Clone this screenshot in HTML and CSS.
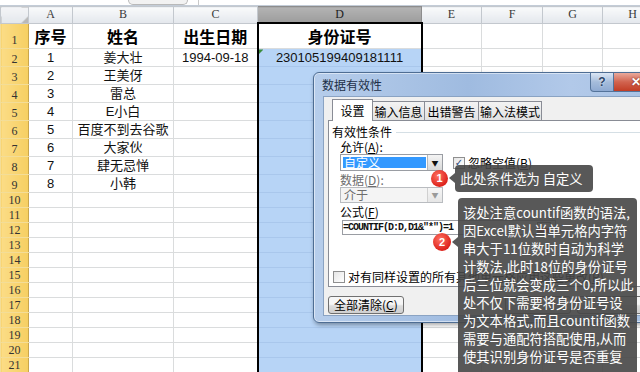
FILE: index.html
```html
<!DOCTYPE html>
<html lang="zh-CN">
<head>
    <meta charset="UTF-8">
    <title>数据有效性</title>
    <link rel="stylesheet" href="styles.css">
</head>
<body>
<div class="sheet">
    <div class="formula-bar">
        <span class="name-box"></span>
        <span class="expand"></span>
        <span class="fx-line"></span>
    </div>

    <table class="grid">
        <colgroup>
            <col class="w-row"><col class="w-a"><col class="w-b"><col class="w-c"><col class="w-d">
            <col class="w-e"><col class="w-f"><col class="w-g"><col class="w-h">
        </colgroup>
        <thead>
            <tr>
                <th class="corner"></th><th>A</th><th>B</th><th>C</th><th class="sel">D</th>
                <th>E</th><th>F</th><th>G</th><th>H</th>
            </tr>
        </thead>
        <tbody>
            <tr class="r-head">
                <th>1</th><td class="hd">序号</td><td class="hd">姓名</td><td class="hd">出生日期</td>
                <td class="hd col-d active">身份证号</td><td></td><td></td><td></td><td></td>
            </tr>
            <tr class="r-data">
                <th>2</th><td>1</td><td>姜大壮</td><td>1994-09-18</td>
                <td class="col-d as-text">230105199409181111</td><td></td><td></td><td></td><td></td>
            </tr>
            <tr class="r-data"><th>3</th><td>2</td><td>王美伢</td><td></td><td class="col-d"></td><td></td><td></td><td></td><td></td></tr>
            <tr class="r-data"><th>4</th><td>3</td><td>雷总</td><td></td><td class="col-d"></td><td></td><td></td><td></td><td></td></tr>
            <tr class="r-data"><th>5</th><td>4</td><td>E小白</td><td></td><td class="col-d"></td><td></td><td></td><td></td><td></td></tr>
            <tr class="r-data"><th>6</th><td>5</td><td>百度不到去谷歌</td><td></td><td class="col-d"></td><td></td><td></td><td></td><td></td></tr>
            <tr class="r-data"><th>7</th><td>6</td><td>大家伙</td><td></td><td class="col-d"></td><td></td><td></td><td></td><td></td></tr>
            <tr class="r-data"><th>8</th><td>7</td><td>肆无忌惮</td><td></td><td class="col-d"></td><td></td><td></td><td></td><td></td></tr>
            <tr class="r-data"><th>9</th><td>8</td><td>小韩</td><td></td><td class="col-d"></td><td></td><td></td><td></td><td></td></tr>
            <tr class="r-empty"><th>10</th><td></td><td></td><td></td><td class="col-d"></td><td></td><td></td><td></td><td></td></tr>
            <tr class="r-empty"><th>11</th><td></td><td></td><td></td><td class="col-d"></td><td></td><td></td><td></td><td></td></tr>
            <tr class="r-empty"><th>12</th><td></td><td></td><td></td><td class="col-d"></td><td></td><td></td><td></td><td></td></tr>
            <tr class="r-empty"><th>13</th><td></td><td></td><td></td><td class="col-d"></td><td></td><td></td><td></td><td></td></tr>
            <tr class="r-empty"><th>14</th><td></td><td></td><td></td><td class="col-d"></td><td></td><td></td><td></td><td></td></tr>
            <tr class="r-empty"><th>15</th><td></td><td></td><td></td><td class="col-d"></td><td></td><td></td><td></td><td></td></tr>
            <tr class="r-empty"><th>16</th><td></td><td></td><td></td><td class="col-d"></td><td></td><td></td><td></td><td></td></tr>
            <tr class="r-empty"><th>17</th><td></td><td></td><td></td><td class="col-d"></td><td></td><td></td><td></td><td></td></tr>
            <tr class="r-empty"><th>18</th><td></td><td></td><td></td><td class="col-d"></td><td></td><td></td><td></td><td></td></tr>
            <tr class="r-empty"><th>19</th><td></td><td></td><td></td><td class="col-d"></td><td></td><td></td><td></td><td></td></tr>
            <tr class="r-empty"><th>20</th><td></td><td></td><td></td><td class="col-d"></td><td></td><td></td><td></td><td></td></tr>
            <tr class="r-empty"><th>21</th><td></td><td></td><td></td><td class="col-d"></td><td></td><td></td><td></td><td></td></tr>
            <tr class="r-empty"><th></th><td></td><td></td><td></td><td class="col-d"></td><td></td><td></td><td></td><td></td></tr>
        </tbody>
    </table>

    <div class="dialog">
        <div class="dlg-title">
            数据有效性
            <div class="dlg-btns">
                <span class="tb-help">?</span>
                <span class="tb-close">✕</span>
            </div>
        </div>
        <div class="dlg-body">
            <div class="tabs">
                <span class="tab t1 active">设置</span>
                <span class="tab t2">输入信息</span>
                <span class="tab t3">出错警告</span>
                <span class="tab t4">输入法模式</span>
            </div>
            <div class="panel">
                <div class="group-head">有效性条件</div>
                <div class="fields">
                    <div class="field-label">允许(<u>A</u>):</div>
                    <div class="combo-row">
                        <div class="combo">
                            <span class="val">自定义</span>
                            <span class="arrow">▼</span>
                        </div>
                        <div class="check">
                            <span class="box checked">✓</span>
                            <span>忽略空值(<u>B</u>)</span>
                        </div>
                    </div>
                    <div class="field-label disabled">数据(<u>D</u>):</div>
                    <div class="combo off">
                        <span class="val">介于</span>
                        <span class="arrow">▼</span>
                    </div>
                    <div class="field-label formula-label">公式(<u>F</u>)</div>
                    <div class="formula">
                        <span>=COUNTIF(D:D,D1&amp;"*")=1</span>
                        <span class="picker"></span>
                    </div>
                </div>
                <div class="check apply">
                    <span class="box"></span>
                    <span>对有同样设置的所有其他单元格应用这些更改(<u>P</u>)</span>
                </div>
            </div>
            <div class="btn-row">
                <span class="btn">全部清除(<u>C</u>)</span>
                <span class="btn ok"></span>
                <span class="btn cancel"></span>
            </div>
        </div>
    </div>

    <span class="badge b1">1</span>
    <div class="callout c1">此处条件选为 自定义</div>

    <span class="badge b2">2</span>
    <div class="callout c2">
        该处注意countif函数的语法,<br>
        因Excel默认当单元格内字符<br>
        串大于11位数时自动为科学<br>
        计数法,此时18位的身份证号<br>
        后三位就会变成三个0,所以此<br>
        处不仅下需要将身份证号设<br>
        为文本格式,而且countif函数<br>
        需要与通配符搭配使用,从而<br>
        使其识别身份证号是否重复
    </div>
</div>
</body>
</html>
```

FILE: styles.css
```css
body {
    margin: 0;
    width: 640px;
    height: 372px;
    overflow: hidden;
    background: #fff;
    font-family: 'Liberation Sans', 'Noto Sans CJK SC', sans-serif;
}

.sheet {
    position: relative;
    width: 640px;
    height: 372px;
    overflow: hidden;
}

/* bottom edge of the formula bar */
.formula-bar {
    height: 6px;
    box-sizing: border-box;
    border-bottom: 1px solid #c3ccd7;
    display: flex;
}

.name-box {
    width: 128px;
}

.expand {
    width: 58px;
    height: 4px;
    border: 1px solid #b9b9b9;
    border-top: none;
    border-radius: 0 0 6px 6px;
    background: #f2f2f2;
}

.fx-line {
    width: 10px;
    border-right: 1px solid #c9c9c9;
}

/* grid: row heights come from the row header line-height */
.grid {
    border-collapse: collapse;
    table-layout: fixed;
    width: 662px;
}

.w-row { width: 28px; }
.w-a { width: 44px; }
.w-b { width: 101px; }
.w-c { width: 84px; }
.w-d { width: 164px; }
.w-e { width: 60px; }
.w-f { width: 61px; }
.w-g { width: 60px; }
.w-h { width: 60px; }

.grid th,
.grid td {
    padding: 0;
    border: 1px solid #dadcdd;
    overflow: hidden;
    white-space: nowrap;
    text-align: center;
    line-height: 1;
}

.grid td {
    font-size: 13px;
    color: #111;
}

.grid thead th {
    background: linear-gradient(#f9fafb, #e3e7ec);
    border-color: #c3c8ce;
    font: normal 12px/15px 'Liberation Serif', serif;
    color: #3a3a3a;
}

.grid thead th.corner {
    background: linear-gradient(315deg, #b9b9b9 5px, transparent 5px), linear-gradient(#f4f5f7, #e3e7ec);
}

.grid thead th.sel {
    background: linear-gradient(#b3b3b3, #9d9d9d);
    color: #1c1c1c;
    border-color: #8d8d8d;
}

.grid tbody th {
    background: linear-gradient(to right, #fbdc86, #f6cf62);
    border-color: #f3dd98;
    border-right-color: #c9a64c;
    font: normal 12px 'Liberation Serif', serif;
    color: #333;
    line-height: 14px;
}

.r-head th {
    padding-top: 8px;
}

.r-data th {
    padding-top: 3px;
}

.grid td.hd {
    font: bold 16px 'Noto Sans CJK SC', sans-serif;
    color: #000;
}

.grid td.col-d {
    background: #b7d4f6;
    border-left: 2px solid #000;
    border-right: 2px solid #000;
    border-bottom-color: #a9c7ec;
}

.grid td.col-d.active {
    background: #fff;
    border-top: 2px solid #000;
    border-bottom-color: #dadcdd;
}

.grid td.col-d.as-text {
    background: linear-gradient(135deg, #3b8c3b 3px, transparent 3px), #b7d4f6;
}

/* dialog */
.dialog {
    position: absolute;
    left: 313px;
    top: 72px;
    width: 345px;
    height: 251px;
    box-sizing: border-box;
    border: 1px solid #4e6d93;
    border-radius: 6px;
    background: linear-gradient(to right, #b6cdeb, #9fbbe0 45%, #b2c9e9 75%, #a8c2e4);
    box-shadow: inset 0 0 0 1px rgba(255, 255, 255, 0.5), 1px 2px 4px rgba(0, 0, 0, 0.35);
    display: flex;
    flex-direction: column;
    font-family: 'Noto Sans CJK SC', sans-serif;
    font-size: 12px;
    color: #000;
}

.dlg-title {
    height: 23px;
    display: flex;
    align-items: center;
    padding-left: 8px;
    color: #1d2f47;
    position: relative;
}

.dlg-btns {
    position: absolute;
    left: 276px;
    top: 0;
    display: flex;
}

.tb-help,
.tb-close {
    height: 18px;
    display: flex;
    align-items: center;
    justify-content: center;
    border: 1px solid #54739a;
    border-top: none;
    color: #fff;
    font: bold 12px 'Liberation Sans', sans-serif;
}

.tb-help {
    width: 22px;
    border-radius: 0 0 0 4px;
    background: linear-gradient(#dbe6f4, #a5bcdb 50%, #8eaad2);
    color: #2b4467;
    text-shadow: 0 0 2px #fff;
}

.tb-close {
    width: 43px;
    border-left: none;
    background: linear-gradient(#e9a99b, #d1634f 50%, #c23d25);
    text-shadow: 0 0 2px #6a1a0e;
}

.dlg-body {
    flex: 1;
    margin: 0 7px 6px 9px;
    background: #f0f0f0;
    border: 1px solid #8aa3c3;
    padding: 0 6px 0 4px;
    display: flex;
    flex-direction: column;
}

.tabs {
    display: flex;
    margin-top: 4px;
    padding-left: 4px;
    height: 20px;
}

.tab {
    box-sizing: border-box;
    height: 20px;
    border: 1px solid #898c95;
    border-bottom: none;
    margin-right: -1px;
    background: linear-gradient(#f3f3f3, #e1e1e1);
    text-align: center;
    line-height: 19px;
}

.t1 { width: 41px; }
.t2 { width: 53px; }
.t3 { width: 55px; }
.t4 { width: 64px; }

.tab.active {
    position: relative;
    z-index: 1;
    height: 22px;
    margin-top: -2px;
    background: #fff;
    line-height: 22px;
}

.panel {
    height: 167px;
    box-sizing: border-box;
    margin-top: -1px;
    border: 1px solid #898c95;
    background: #fff;
    padding: 4px 0 0 3px;
    display: flex;
    flex-direction: column;
}

.group-head {
    display: flex;
    align-items: center;
    line-height: 14px;
}

.group-head::after {
    content: "";
    flex: 1;
    border-top: 1px solid #d5dfe5;
    margin-left: 4px;
}

.fields {
    margin-left: 8px;
    display: flex;
    flex-direction: column;
}

.field-label {
    line-height: 14px;
    margin-top: 1px;
}

.field-label.disabled {
    color: #6d6d6d;
    margin-top: 2px;
}

.field-label.formula-label {
    margin-top: 2px;
}

.combo-row {
    display: flex;
    align-items: center;
}

.combo {
    width: 103px;
    height: 17px;
    box-sizing: border-box;
    border: 1px solid #9a9da3;
    background: #fff;
    display: flex;
}

.combo .val {
    flex: 1;
    margin: 2px 1px 2px 2px;
    padding-left: 1px;
    background: #3399ff;
    color: #fff;
    line-height: 11px;
}

.combo .arrow {
    width: 14px;
    border-left: 1px solid #b7b7b7;
    background: linear-gradient(#f4f4f4, #d9d9d9);
    display: flex;
    align-items: center;
    justify-content: center;
    font-size: 7px;
    color: #111;
}

.combo.off {
    height: 16px;
    border-color: #b9bcc0;
    background: #f4f4f4;
}

.combo.off .val {
    background: none;
    color: #6d6d6d;
    margin: 0 0 0 2px;
    line-height: 14px;
}

.combo.off .arrow {
    color: #9a9a9a;
    border-left-color: #d0d0d0;
    background: linear-gradient(#f6f6f6, #e6e6e6);
}

.check {
    display: flex;
    align-items: center;
    gap: 3px;
    margin-left: 10px;
    line-height: 14px;
    white-space: nowrap;
}

.box {
    width: 12px;
    height: 12px;
    box-sizing: border-box;
    border: 1px solid #8f8f8f;
    background: linear-gradient(135deg, #e6e6e6, #fff);
    display: flex;
    align-items: center;
    justify-content: center;
    font: bold 10px 'DejaVu Sans', sans-serif;
    color: #2b4a7a;
}

.formula {
    width: 214px;
    height: 15px;
    box-sizing: border-box;
    margin: 1px 0 0 2px;
    border: 1px solid #9a9da3;
    background: #fff;
    display: flex;
    align-items: center;
    justify-content: space-between;
    font: bold 10px 'Liberation Mono', monospace;
    letter-spacing: -1px;
    color: #111;
}

.picker {
    width: 12px;
    height: 9px;
    margin-right: 4px;
    border: 1px solid #7a7a7a;
    background: linear-gradient(#fff 50%, #c9372c 50%);
}

.check.apply {
    margin: auto 0 2px 1px;
}

.btn-row {
    display: flex;
    gap: 6px;
    margin-top: 9px;
}

.btn {
    height: 18px;
    box-sizing: border-box;
    border: 1px solid #707070;
    border-radius: 3px;
    background: linear-gradient(#f6f6f6 45%, #dddddd 55%, #d0d0d0);
    padding: 0 5px;
    line-height: 16px;
    text-align: center;
}

.btn.ok {
    margin-left: auto;
    width: 66px;
}

.btn.cancel {
    width: 66px;
}

/* annotations */
.callout {
    position: absolute;
    background: rgba(70, 70, 70, 0.9);
    color: #fff;
    font-family: 'Noto Sans CJK SC', sans-serif;
    font-size: 13.3px;
    border-radius: 4px;
    white-space: nowrap;
}

.callout::before {
    content: "";
    position: absolute;
    left: -6px;
    border: 5px solid transparent;
    border-left: none;
    border-right: 6px solid rgba(70, 70, 70, 0.9);
}

.c1 {
    left: 455px;
    top: 165px;
    width: 138px;
    height: 27px;
    box-sizing: border-box;
    padding-left: 5px;
    line-height: 27px;
}

.c1::before {
    top: 8px;
}

.c2 {
    left: 458px;
    top: 198px;
    width: 179px;
    height: 180px;
    box-sizing: border-box;
    padding: 6px 0 0 5px;
    line-height: 18px;
}

.c2::before {
    top: 39px;
}

.badge {
    position: absolute;
    width: 17px;
    height: 17px;
    border-radius: 50%;
    background: radial-gradient(circle at 40% 35%, #ff7262, #dd221b 70%);
    color: #fff;
    font: bold 11px 'Liberation Sans', sans-serif;
    text-align: center;
    line-height: 17px;
}

.b1 {
    left: 431px;
    top: 170px;
}

.b2 {
    left: 433px;
    top: 233px;
    width: 18px;
    height: 18px;
    line-height: 18px;
}
```
